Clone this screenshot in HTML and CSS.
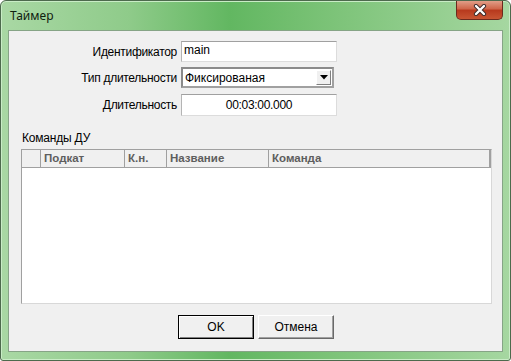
FILE: index.html
```html
<!DOCTYPE html>
<html lang="ru">
<head>
    <meta charset="UTF-8">
    <meta name="viewport" content="width=device-width, initial-scale=1.0">
    <title>Таймер</title>
    <link rel="stylesheet" href="styles.css">
</head>
<body>
    <div class="window">
        <div class="title-bar">
            <span class="title">Таймер</span>
            <button class="close-button" type="button" aria-label="Закрыть">
                <svg width="16" height="12" viewBox="0 0 16 12">
                    <path d="M4 2 L12 10 M12 2 L4 10" stroke="#3a2a2a" stroke-width="4.2" stroke-linecap="round"/>
                    <path d="M4 2 L12 10 M12 2 L4 10" stroke="#ffffff" stroke-width="2.4" stroke-linecap="round"/>
                </svg>
            </button>
        </div>

        <div class="client">
            <div class="timer-form">
                <label for="timer-id">Идентификатор</label>
                <input type="text" id="timer-id" class="field field-id" value="main">

                <label for="timer-type">Тип длительности</label>
                <div class="combo" id="timer-type">
                    <span class="combo-value">Фиксированая</span>
                    <span class="combo-button">
                        <svg width="8" height="5" viewBox="0 0 8 5"><path d="M0 0 H8 L4 4.5 Z" fill="#000"/></svg>
                    </span>
                </div>

                <label for="timer-duration">Длительность</label>
                <input type="text" id="timer-duration" class="field field-duration" value="00:03:00.000">
            </div>

            <div class="section-label">Команды ДУ</div>
            <div class="grid">
                <div class="grid-header">
                    <div class="col col-mark"></div>
                    <div class="col col-sub">Подкат</div>
                    <div class="col col-num">К.н.</div>
                    <div class="col col-name">Название</div>
                    <div class="col col-cmd">Команда</div>
                </div>
                <div class="grid-body"></div>
            </div>

            <div class="buttons">
                <button type="button" class="btn btn-default">OK</button>
                <button type="button" class="btn">Отмена</button>
            </div>
        </div>
    </div>
</body>
</html>
```

FILE: styles.css
```css
body {
    margin: 0;
    padding: 0;
    background: #ffffff;
    font-family: "Liberation Sans", Arial, sans-serif;
}

.window {
    width: 511px;
    height: 361px;
    box-sizing: border-box;
    border: 1px solid #4d6a4d;
    border-radius: 6px 6px 3px 3px;
    background: linear-gradient(90deg, #a9d8a4 0%, #8fcb8a 25%, #62b761 45%, #7cc378 65%, #a6d7a1 100%);
    display: flex;
    flex-direction: column;
    overflow: hidden;
    box-shadow: inset 0 0 0 1px #c9ecc6;
}

.title-bar {
    height: 29px;
    flex: none;
    display: flex;
    align-items: flex-start;
    justify-content: space-between;
    padding: 0 7px 0 9px;
}

.title {
    font-family: "Noto Sans", "Open Sans", sans-serif;
    font-size: 12px;
    color: #10200f;
    margin-top: 6px;
}

.close-button {
    width: 47px;
    height: 20px;
    margin-top: -1px;
    padding: 0;
    border: 1px solid #6b2a1e;
    border-top: none;
    border-radius: 0 0 5px 5px;
    background: linear-gradient(180deg, #e3a590 0%, #d0684c 45%, #b83a1e 55%, #c85533 100%);
    display: flex;
    align-items: center;
    justify-content: center;
}

.client {
    flex: 1;
    margin: 0 7px 8px 7px;
    border: 1px solid #86a486;
    background: #f0f0f0;
    display: flex;
    flex-direction: column;
    font-size: 12px;
    color: #000;
}

.timer-form {
    display: grid;
    grid-template-columns: 168px 156px;
    column-gap: 4px;
    row-gap: 5px;
    padding: 10px 0 0 0;
    align-items: center;
}

.timer-form label {
    text-align: right;
    font-size: 12px;
    letter-spacing: -0.3px;
}

.field {
    height: 21px;
    box-sizing: border-box;
    margin: 0;
    padding: 0 2px;
    border: 1px solid #dcdcdc;
    border-top-color: #a0a0a0;
    border-left-color: #b4b4b4;
    background: #fff;
    font-family: "Liberation Sans", Arial, sans-serif;
    font-size: 12px;
    color: #000;
}

.field-id {
    padding-top: 0;
    padding-bottom: 4px;
}

.field-duration {
    height: 22px;
    margin-top: 1px;
    text-align: center;
    letter-spacing: -0.3px;
}

.combo {
    width: 153px;
    height: 21px;
    box-sizing: border-box;
    border: 2px solid #8a8a8a;
    border-right-color: #a0a0a0;
    border-bottom-color: #a0a0a0;
    background: #fff;
    display: flex;
    align-items: center;
    justify-content: space-between;
}

.combo-value {
    padding-left: 2px;
    font-size: 12px;
}

.combo-button {
    width: 15px;
    height: 15px;
    margin-right: 1px;
    background: #f0f0f0;
    border: 1px solid #fff;
    border-right-color: #808080;
    border-bottom-color: #808080;
    box-sizing: border-box;
    display: flex;
    align-items: center;
    justify-content: center;
}

.section-label {
    margin: 15px 0 0 13px;
    height: 16px;
    letter-spacing: -0.2px;
}

.grid {
    margin: 2px 10px 0 12px;
    height: 153px;
    border: 1px solid #a0a0a0;
    border-right-color: #d8d8d8;
    border-bottom-color: #d8d8d8;
    background: #fff;
    display: flex;
    flex-direction: column;
}

.grid-header {
    height: 17px;
    display: flex;
    background: #f0f0f0;
    border-bottom: 1px solid #a0a0a0;
    font-size: 11.5px;
    font-weight: bold;
    color: #5e5e5e;
}

.col {
    box-sizing: border-box;
    padding: 2px 0 0 3px;
    border-right: 1px solid #a0a0a0;
}

.col-mark {
    width: 19px;
}

.col-sub {
    width: 84px;
}

.col-num {
    width: 42px;
}

.col-name {
    width: 102px;
}

.col-cmd {
    flex: 1;
    border-right: 2px solid #a0a0a0;
}

.grid-body {
    flex: 1;
}

.buttons {
    display: flex;
    justify-content: center;
    gap: 4px;
    margin-top: 11px;
    padding-left: 1px;
}

.btn {
    width: 76px;
    height: 24px;
    box-sizing: border-box;
    border: 1px solid #fff;
    border-right-color: #696969;
    border-bottom-color: #696969;
    box-shadow: inset -1px -1px 0 #a0a0a0;
    background: #f0f0f0;
    font-family: "Liberation Sans", Arial, sans-serif;
    font-size: 12px;
    color: #000;
    padding: 0;
}

.btn-default {
    border: 1px solid #000;
    box-shadow: inset 1px 1px 0 #fff, inset -1px -1px 0 #808080;
}
```
